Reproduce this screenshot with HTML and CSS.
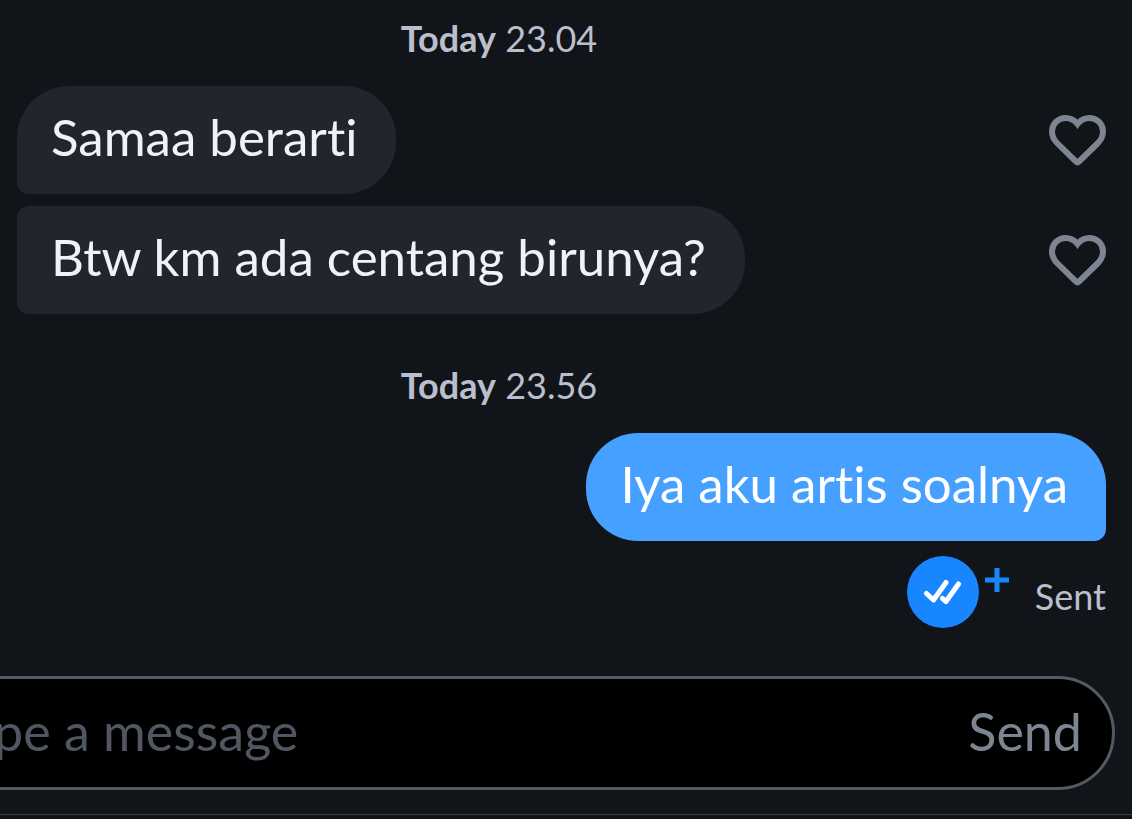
FILE: index.html
```html
<!DOCTYPE html>
<html lang="id">
<head>
    <meta charset="UTF-8">
    <meta name="viewport" content="width=device-width, initial-scale=1.0">
    <title>Chat</title>
    <link rel="stylesheet" href="styles.css">
</head>
<body>
    <main class="chat">
        <div class="timestamp"><strong>Today</strong> <time>23.04</time></div>

        <div class="message received first">
            <p class="bubble">Samaa berarti</p>
            <button class="like" aria-label="Like message">
                <svg viewBox="0 0 58 52" width="58" height="52"><path d="M29.500 10C26 5.500 22 4 17.500 4C10 4 4 10 4 17.500C4 22 6 26 9.500 29.500L28 47.500Q29.500 49.500 31 47.500L49.500 29.500C53 26 55 22 55 17.500C55 10 49 4 41.500 4C37 4 33 5.500 29.500 10Z"/></svg>
            </button>
        </div>
        <div class="message received last">
            <p class="bubble">Btw km ada centang birunya?</p>
            <button class="like" aria-label="Like message">
                <svg viewBox="0 0 58 52" width="58" height="52"><path d="M29.500 10C26 5.500 22 4 17.500 4C10 4 4 10 4 17.500C4 22 6 26 9.500 29.500L28 47.500Q29.500 49.500 31 47.500L49.500 29.500C53 26 55 22 55 17.500C55 10 49 4 41.500 4C37 4 33 5.500 29.500 10Z"/></svg>
            </button>
        </div>

        <div class="timestamp later"><strong>Today</strong> <time>23.56</time></div>

        <div class="message sent">
            <p class="bubble">Iya aku artis soalnya</p>
        </div>

        <div class="status">
            <svg class="receipt" viewBox="0 0 104 72" width="104" height="72" aria-hidden="true">
                <circle cx="36" cy="36" r="36" fill="#1786ff"/>
                <path class="ticks" d="M19.500 37.500L26.500 44L39 26.500M35.500 42.500L39 45.500L51.500 28"/>
                <path class="plus" d="M78 24H102M90 12V36"/>
            </svg>
            <span>Sent</span>
        </div>
    </main>

    <form class="composer">
        <input type="text" placeholder="Type a message" aria-label="Message">
        <button type="button">Send</button>
    </form>
    <footer class="toolbar"></footer>
</body>
</html>
```
FILE: styles.css
```css
* {
    box-sizing: border-box;
}

body {
    margin: 0;
    background-color: #111418;
    color: #f0f2f8;
    font-family: Lato, "Open Sans", sans-serif;
    font-size: 51px;
    font-variant-ligatures: none;
    overflow-x: hidden;
}

button,
input {
    border: none;
    padding: 0;
    background: none;
    font: inherit;
}

.chat {
    padding: 18px 26px 0 17px;
}

.timestamp {
    margin: 0 125px 28px 0;
    font-size: 36px;
    line-height: 40px;
    text-align: center;
    color: #b9bfcc;
}

.timestamp.later {
    margin-top: 51px;
}

.message {
    display: flex;
    align-items: center;
    justify-content: space-between;
    margin-bottom: 12px;
}

.bubble {
    margin: 0;
    padding: 21px 39px 27px 34px;
    border-radius: 52px;
    line-height: 60px;
    background-color: #21252e;
}

.received.first .bubble {
    border-bottom-left-radius: 12px;
}

.received.last .bubble {
    border-top-left-radius: 12px;
    border-bottom-left-radius: 12px;
}

.sent {
    justify-content: flex-end;
    margin-bottom: 15px;
}

.sent .bubble {
    padding-right: 38px;
    border-bottom-right-radius: 12px;
    background-color: #46a0ff;
    color: #fff;
}

.like {
    display: flex;
    cursor: pointer;
}

.like path {
    fill: none;
    stroke: #7c8591;
    stroke-width: 6;
}

.status {
    display: flex;
    align-items: center;
    justify-content: flex-end;
    gap: 24px;
    color: #b9bfcc;
    font-size: 36px;
    line-height: 40px;
}

.status span {
    padding-top: 8px;
}

.ticks,
.plus {
    fill: none;
    stroke: #fff;
    stroke-width: 5;
    stroke-linecap: round;
    stroke-linejoin: round;
}

.plus {
    stroke: #1786ff;
    stroke-linecap: butt;
}

.composer {
    display: flex;
    align-items: center;
    height: 114px;
    margin: 48px 17px 24px -134px;
    padding: 0 30px 4px 72px;
    border: 3px solid #555964;
    border-radius: 57px;
    background-color: #000;
    font-size: 52px;
}

.composer input {
    flex: 1;
    min-width: 0;
    color: #f0f2f8;
    outline: none;
}

.composer input::placeholder {
    color: #505662;
    opacity: 1;
}

.composer button {
    color: #7c8591;
    cursor: pointer;
}

.toolbar {
    height: 5px;
    border-top: 1px solid #3a3e47;
}
```
